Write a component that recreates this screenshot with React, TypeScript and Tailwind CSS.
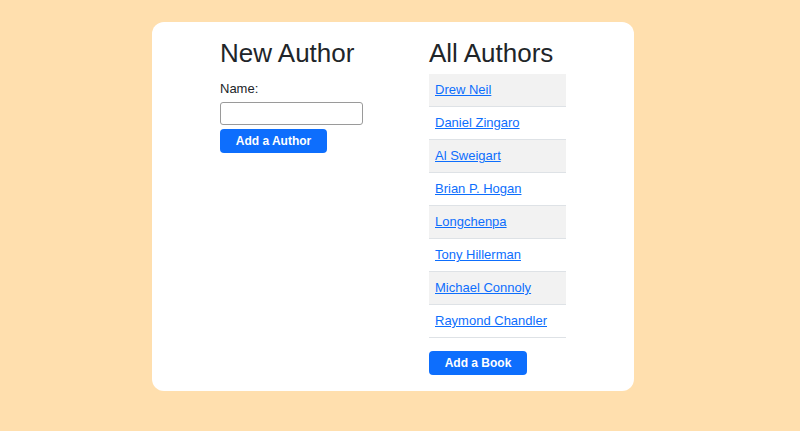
import React from 'react'

const authors = [
  'Drew Neil',
  'Daniel Zingaro',
  'Al Sweigart',
  'Brian P. Hogan',
  'Longchenpa',
  'Tony Hillerman',
  'Michael Connoly',
  'Raymond Chandler',
]

export default function App() {
  return (
    <div className="min-h-[431px] w-full bg-[#ffdfae] pt-[22px] font-['Liberation_Sans',Arial,sans-serif] text-[#212529]">
      <div className="ml-[152px] flex h-[369px] w-[482px] rounded-xl bg-white pl-[68px] pt-4">
        {/* New author form */}
        <div className="w-[209px]">
          <h2 className="text-[26px] leading-[31px]">New Author</h2>
          <label className="mt-[10px] block text-[13px] leading-5">Name:</label>
          <input
            type="text"
            className="mt-[3px] block h-[23px] w-[143px] rounded-[3px] border border-[#9a9a9a] px-1 text-[13px] outline-none"
          />
          <button className="mt-[4px] block h-[24px] w-[107px] rounded-[4px] bg-[#0d6efd] text-[12px] font-semibold text-white">
            Add a Author
          </button>
        </div>

        {/* Author list */}
        <div className="w-[137px]">
          <h2 className="text-[26px] leading-[31px]">All Authors</h2>
          <div className="mt-[5px]">
            {authors.map((name, i) => (
              <div
                key={name}
                className={`flex h-[33px] items-center border-b border-[#dee2e6] pl-[6px] ${
                  i % 2 === 0 ? 'bg-[#f2f2f2]' : 'bg-white'
                }`}
              >
                <a href="#" className="text-[13px] text-[#0d6efd] underline">
                  {name}
                </a>
              </div>
            ))}
          </div>
          <button className="mt-[13px] block h-[24px] w-[98px] rounded-[4px] bg-[#0d6efd] text-[12px] font-semibold text-white">
            Add a Book
          </button>
        </div>
      </div>
    </div>
  )
}
